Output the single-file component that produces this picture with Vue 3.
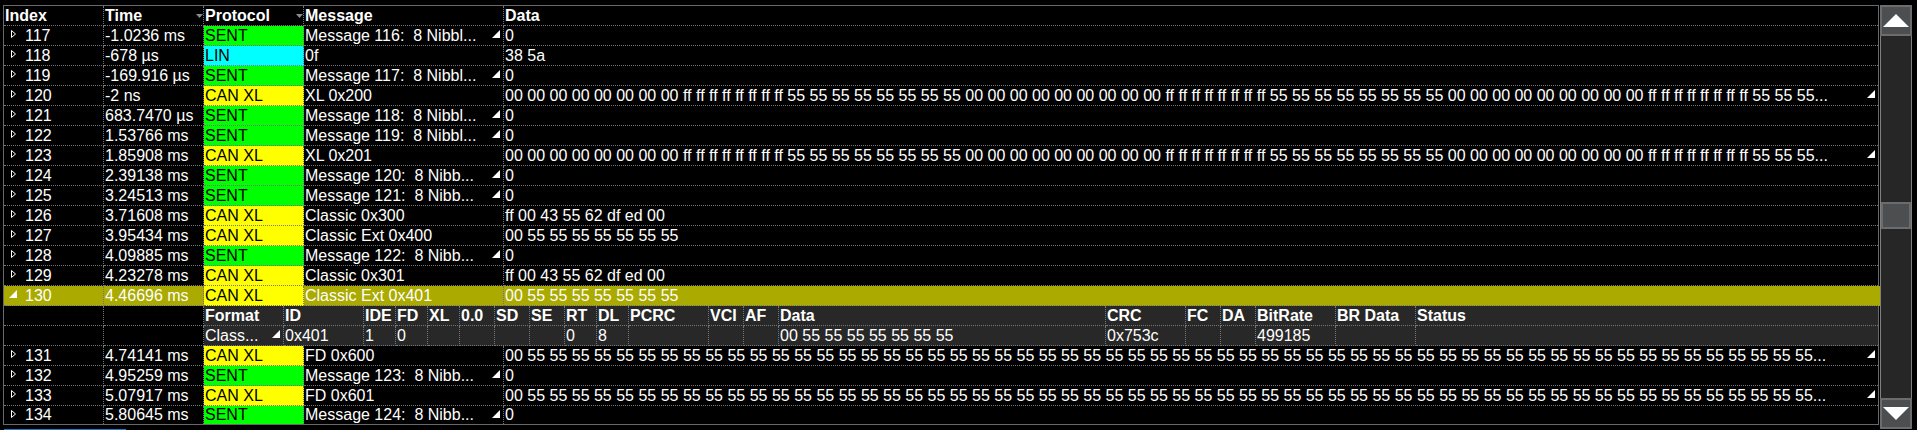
<template>
  <div class="trace-view">
    <div class="trace-body">
      <table class="trace-table">
        <colgroup>
          <col class="col-narrow" />
          <col class="col-narrow" />
          <col class="col-narrow" />
          <col class="col-message" />
          <col />
        </colgroup>
        <thead>
          <tr>
            <th>Index</th>
            <th>
              <div class="cell-split">
                <span>Time</span>
                <svg class="sort-icon" width="7" height="4" viewBox="0 0 7 4"><path d="M0 0h7L3.500 4z" fill="#8c8c8c" /></svg>
              </div>
            </th>
            <th>
              <div class="cell-split">
                <span>Protocol</span>
                <svg class="sort-icon" width="7" height="4" viewBox="0 0 7 4"><path d="M0 0h7L3.500 4z" fill="#8c8c8c" /></svg>
              </div>
            </th>
            <th>Message</th>
            <th>Data</th>
          </tr>
        </thead>
        <tbody>
          <template v-for="row in rows" :key="row.index">
            <tr :class="{ selected: row.index === expanded }">
              <td>
                <div class="cell-index">
                  <button class="expander" :aria-label="'Toggle ' + row.index" @click="toggle(row.index)">
                    <svg v-if="row.index === expanded" width="8" height="8" viewBox="0 0 8 8"><path d="M8 0v8H0z" fill="#fff" /></svg>
                    <svg v-else width="8" height="8" viewBox="0 0 8 8"><path d="M2.500 .5v7L6.500 4z" fill="none" stroke="#fff" /></svg>
                  </button>
                  <span>{{ row.index }}</span>
                </div>
              </td>
              <td>{{ row.time }}</td>
              <td class="protocol" :class="protocolClass[row.protocol]">{{ row.protocol }}</td>
              <td>
                <div class="cell-split">
                  <span class="message">{{ row.message }}</span>
                  <svg v-if="row.message.endsWith('...')" class="more-icon" width="8" height="8" viewBox="0 0 8 8"><path d="M8 0v8H0z" fill="#fff" /></svg>
                </div>
              </td>
              <td>
                <div class="cell-split data">
                  <span>{{ row.data }}</span>
                  <svg v-if="row.data.endsWith('...')" class="more-icon" width="8" height="8" viewBox="0 0 8 8"><path d="M8 0v8H0z" fill="#fff" /></svg>
                </div>
              </td>
            </tr>
            <template v-if="row.index === expanded">
              <tr>
                <td></td>
                <td></td>
                <td class="detail-cell" colspan="3" rowspan="2">
                  <table class="detail-table">
                    <thead>
                      <tr>
                        <th v-for="field in fields" :key="field.name" :class="field.size">{{ field.name }}</th>
                      </tr>
                    </thead>
                    <tbody>
                      <tr>
                        <td v-for="field in fields" :key="field.name">
                          <div class="cell-split">
                            <span>{{ field.value }}</span>
                            <svg v-if="field.value.endsWith('...')" class="more-icon" width="8" height="8" viewBox="0 0 8 8"><path d="M8 0v8H0z" fill="#fff" /></svg>
                          </div>
                        </td>
                      </tr>
                    </tbody>
                  </table>
                </td>
              </tr>
              <tr>
                <td></td>
                <td></td>
              </tr>
            </template>
          </template>
        </tbody>
      </table>
      <div class="progress"></div>
    </div>

    <div class="scrollbar">
      <button class="scroll-btn" aria-label="Scroll up">
        <svg width="26" height="13" viewBox="0 0 26 13"><path d="M13 0L26 13H0z" fill="#fff" /></svg>
      </button>
      <div class="track">
        <div class="space-before"></div>
        <div class="thumb"></div>
        <div class="space-after"></div>
      </div>
      <button class="scroll-btn" aria-label="Scroll down">
        <svg width="26" height="13" viewBox="0 0 26 13"><path d="M0 0h26L13 13z" fill="#fff" /></svg>
      </button>
    </div>
  </div>
</template>

<script setup>
import { ref } from 'vue';

const repeat = (byte, count) => Array(count).fill(byte).join(' ');

const xlData = [
  repeat('00', 8), repeat('ff', 8), repeat('55', 8),
  repeat('00', 9), repeat('ff', 8), repeat('55', 8),
  repeat('00', 9), repeat('ff', 8), repeat('55', 3)
].join(' ') + '...';
const fdData = '00 ' + repeat('55', 58) + '...';
const classicData = 'ff 00 43 55 62 df ed 00';
const extData = '00 55 55 55 55 55 55 55';

const protocolClass = {
  SENT: 'sent',
  LIN: 'lin',
  'CAN XL': 'can-xl'
};

const rows = [
  { index: 117, time: '-1.0236 ms', protocol: 'SENT', message: 'Message 116:  8 Nibbl...', data: '0' },
  { index: 118, time: '-678 µs', protocol: 'LIN', message: '0f', data: '38 5a' },
  { index: 119, time: '-169.916 µs', protocol: 'SENT', message: 'Message 117:  8 Nibbl...', data: '0' },
  { index: 120, time: '-2 ns', protocol: 'CAN XL', message: 'XL 0x200', data: xlData },
  { index: 121, time: '683.7470 µs', protocol: 'SENT', message: 'Message 118:  8 Nibbl...', data: '0' },
  { index: 122, time: '1.53766 ms', protocol: 'SENT', message: 'Message 119:  8 Nibbl...', data: '0' },
  { index: 123, time: '1.85908 ms', protocol: 'CAN XL', message: 'XL 0x201', data: xlData },
  { index: 124, time: '2.39138 ms', protocol: 'SENT', message: 'Message 120:  8 Nibb...', data: '0' },
  { index: 125, time: '3.24513 ms', protocol: 'SENT', message: 'Message 121:  8 Nibb...', data: '0' },
  { index: 126, time: '3.71608 ms', protocol: 'CAN XL', message: 'Classic 0x300', data: classicData },
  { index: 127, time: '3.95434 ms', protocol: 'CAN XL', message: 'Classic Ext 0x400', data: extData },
  { index: 128, time: '4.09885 ms', protocol: 'SENT', message: 'Message 122:  8 Nibb...', data: '0' },
  { index: 129, time: '4.23278 ms', protocol: 'CAN XL', message: 'Classic 0x301', data: classicData },
  { index: 130, time: '4.46696 ms', protocol: 'CAN XL', message: 'Classic Ext 0x401', data: extData },
  { index: 131, time: '4.74141 ms', protocol: 'CAN XL', message: 'FD 0x600', data: fdData },
  { index: 132, time: '4.95259 ms', protocol: 'SENT', message: 'Message 123:  8 Nibb...', data: '0' },
  { index: 133, time: '5.07917 ms', protocol: 'CAN XL', message: 'FD 0x601', data: fdData },
  { index: 134, time: '5.80645 ms', protocol: 'SENT', message: 'Message 124:  8 Nibb...', data: '0' }
];

const fields = [
  { name: 'Format', size: 'wide', value: 'Class...' },
  { name: 'ID', size: 'wide', value: '0x401' },
  { name: 'IDE', size: 'tiny', value: '1' },
  { name: 'FD', size: 'tiny', value: '0' },
  { name: 'XL', size: 'tiny', value: '' },
  { name: '0.0', size: 'small', value: '' },
  { name: 'SD', size: 'small', value: '' },
  { name: 'SE', size: 'small', value: '' },
  { name: 'RT', size: 'tiny', value: '0' },
  { name: 'DL', size: 'tiny', value: '8' },
  { name: 'PCRC', size: 'wide', value: '' },
  { name: 'VCI', size: 'small', value: '' },
  { name: 'AF', size: 'small', value: '' },
  { name: 'Data', size: 'bytes', value: extData },
  { name: 'CRC', size: 'wide', value: '0x753c' },
  { name: 'FC', size: 'small', value: '' },
  { name: 'DA', size: 'small', value: '' },
  { name: 'BitRate', size: 'wide', value: '499185' },
  { name: 'BR Data', size: 'wide', value: '' },
  { name: 'Status', size: 'rest', value: '' }
];

const expanded = ref(130);

const toggle = (index) => {
  expanded.value = expanded.value === index ? null : index;
};
</script>

<style>
body {
  background: #000;
}
</style>

<style scoped>
.trace-view {
  display: flex;
  gap: 1px;
  padding: 5px 5px 0 3px;
  background: #000;
  color: #fff;
  font-family: "Liberation Sans", Arial, sans-serif;
  font-size: 16px;
  line-height: 19px;
}

.trace-body {
  flex: 1;
  min-width: 0;
}

table {
  width: 100%;
  table-layout: fixed;
  border-collapse: separate;
  border-spacing: 0;
}

.trace-table {
  border: 1px solid #696969;
}

.col-narrow {
  width: 100px;
}

.col-message {
  width: 200px;
}

th,
td {
  box-sizing: border-box;
  height: 20px;
  padding: 0 0 0 1px;
  border-right: 1px dotted #757575;
  border-bottom: 1px dotted #757575;
  text-align: left;
  vertical-align: top;
  white-space: nowrap;
}

th:last-child,
td:last-child:not(:nth-child(2)) {
  border-right: none;
}

.trace-table > tbody > tr:last-child > td {
  height: 18px;
  border-bottom: none;
  line-height: 18px;
}

.cell-split {
  display: flex;
  justify-content: space-between;
}

.cell-split.data {
  padding-right: 3px;
}

.cell-split .more-icon {
  flex: none;
  margin-top: 4px;
}

td:not(:last-child) .more-icon {
  margin-right: 3px;
}

.sort-icon {
  margin-top: 8px;
}

.message {
  white-space: pre;
}

.cell-index {
  display: flex;
  gap: 8px;
  padding-left: 4px;
}

.expander {
  display: block;
  width: 8px;
  height: 16px;
  padding: 4px 0;
  border: none;
  background: none;
  line-height: 8px;
  cursor: pointer;
}

.expander svg {
  display: block;
}

.protocol {
  color: #000;
}

.sent {
  background: #00ff00;
}

.lin {
  background: #00ffff;
}

.can-xl {
  background: #ffff00;
}

.selected td:not(.protocol) {
  background: #aaaa00;
}

.selected td:last-child {
  box-shadow: 2px 0 0 #aaaa00;
}

.detail-cell {
  padding: 0;
  border: none;
}

.detail-table {
  background: #282828;
}

.wide {
  width: 80px;
}

.small {
  width: 35px;
}

.tiny {
  width: 32px;
}

.bytes {
  width: 327px;
}

.progress {
  width: 122px;
  height: 1px;
  margin: 4px 0 0 1px;
  background: #1e78d2;
}

.scrollbar {
  display: flex;
  flex-direction: column;
  box-sizing: border-box;
  width: 32px;
  margin-bottom: 1px;
  background: #262626;
}

.scroll-btn {
  display: flex;
  align-items: center;
  justify-content: center;
  width: 32px;
  height: 31px;
  padding: 0;
  border: 2px solid #6b6c6e;
  background: #4d4e50;
  cursor: pointer;
}

.scroll-btn svg {
  flex: none;
}

.track {
  display: flex;
  flex: 1;
  flex-direction: column;
  border: solid #808080;
  border-width: 0 1px;
}

.space-before {
  flex: 165;
}

.thumb {
  box-sizing: border-box;
  height: 27px;
  border: 2px solid #6b6c6e;
  background: #4d4e50;
}

.space-after {
  flex: 169;
}
</style>
